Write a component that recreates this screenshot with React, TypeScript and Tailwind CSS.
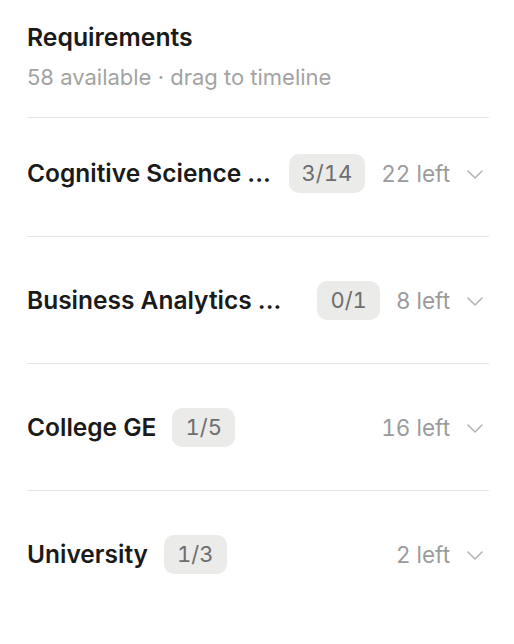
type Group = {
  name: string;
  done: number;
  total: number;
  left: number;
  clipped?: boolean;
};

const groups: Group[] = [
  { name: "Cognitive Science ...", done: 3, total: 14, left: 22, clipped: true },
  { name: "Business Analytics ...", done: 0, total: 1, left: 8, clipped: true },
  { name: "College GE", done: 1, total: 5, left: 16 },
  { name: "University", done: 1, total: 3, left: 2 },
];

function Chevron() {
  return (
    <svg width="16" height="9" viewBox="0 0 16 9" fill="none" className="ml-[17px] mr-[6px] mt-[2px] shrink-0">
      <path d="M1 1l7 7 7-7" stroke="#b3b3b3" strokeWidth="1.5" strokeLinecap="round" strokeLinejoin="round" />
    </svg>
  );
}

function GroupRow({ group, first }: { group: Group; first: boolean }) {
  return (
    <div className={`flex items-center border-t border-[#e6e6e6] ${first ? "pt-[36px]" : "pt-[44px]"} pb-[43px]`}>
      <div className="flex min-w-0 flex-1 items-center gap-4">
        <span className={`min-w-0 truncate text-[24.5px] font-semibold text-[#1a1a1a] ${group.clipped ? "flex-1" : ""}`}>
          {group.name}
        </span>
        <span className="shrink-0 rounded-[10px] bg-[#ebebea] px-[13px] py-[5px] text-[22px] leading-[29px] tabular-nums text-[#6e6e6e]">
          {group.done}/{group.total}
        </span>
      </div>
      <span className="ml-4 shrink-0 text-[22.5px] tabular-nums text-[#9b9b9b]">{group.left} left</span>
      <Chevron />
    </div>
  );
}

export default function App() {
  return (
    <div className="min-h-screen bg-white pl-[27px] pr-[25px] pt-[20px]" style={{ fontFamily: "Inter, 'Noto Sans', sans-serif" }}>
      <div className="pb-[25px]">
        <h1 className="text-[24.75px] font-semibold leading-[34px] text-[#1a1a1a]">Requirements</h1>
        <p className="mt-[8px] text-[22px] leading-[30px] text-[#a3a3a3]">58 available · drag to timeline</p>
      </div>
      <div className="flex flex-col">
        {groups.map((g, i) => (
          <GroupRow key={g.name} group={g} first={i === 0} />
        ))}
      </div>
    </div>
  );
}
